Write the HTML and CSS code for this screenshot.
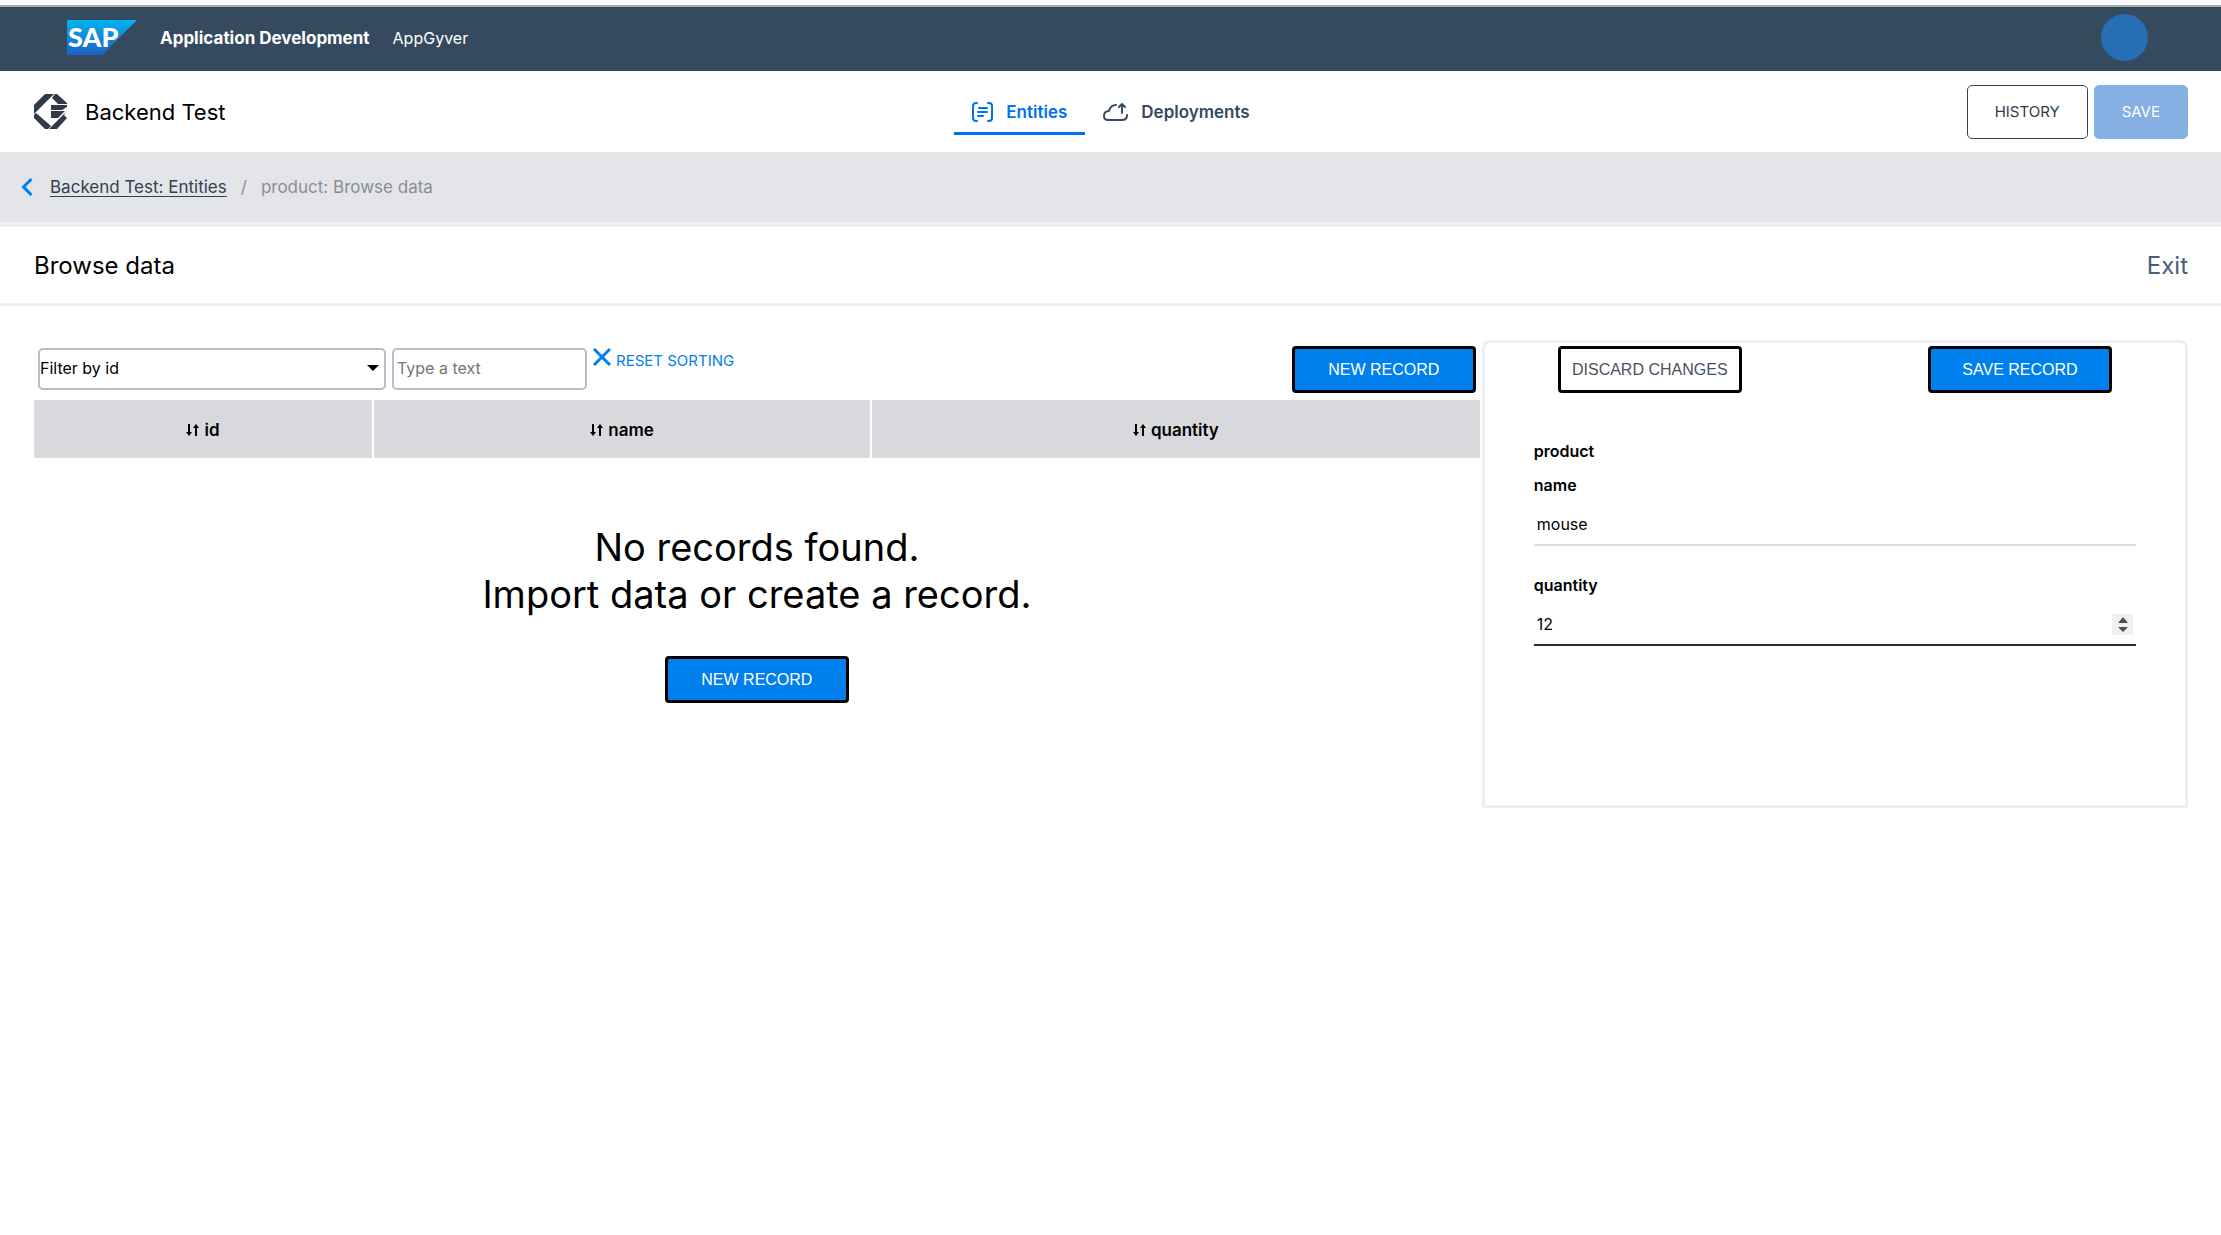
FILE: index.html
```html
<!DOCTYPE html>
<html lang="en">
<head>
<meta charset="utf-8">
<meta name="viewport" content="width=device-width, initial-scale=1">
<title>Backend Test – Browse data</title>
<link rel="stylesheet" href="styles.css">
</head>
<body>
<header class="shell">
  <svg class="sap-logo" viewBox="0 0 70 35" role="img" aria-label="SAP">
    <defs><linearGradient id="sap-blue" x1="0" y1="0" x2="0" y2="1"><stop offset="0" stop-color="#00b4f0"/><stop offset="1" stop-color="#1f60c2"/></linearGradient></defs>
    <path d="M0 0H70L35 35H0z" fill="url(#sap-blue)"/>
    <text class="sap-letters" x="1" y="27">SAP</text>
  </svg>
  <strong class="shell-title">Application Development</strong>
  <span class="shell-product">AppGyver</span>
  <button class="avatar" type="button" aria-label="Profile"></button>
</header>

<div class="project-bar">
  <div class="project">
    <svg class="project-icon" viewBox="0 0 33 35" aria-hidden="true">
      <g fill="#303a4b">
        <path d="M0 11 11 0H20L2 18 0 20z"/>
        <path d="M0 21 2 19 17 32 14 35H11L0 24z"/>
        <path d="M18 4 21 0H23L33 9V10H24z"/>
        <path d="M17 11H33V13L28 16H17z"/>
        <path d="M17 17H31L24 24H17z"/>
        <path d="M32 18 30 21 33 24 23 35H15z"/>
      </g>
    </svg>
    <span class="project-name">Backend Test</span>
  </div>
  <nav class="tabs">
    <a class="tab tab-active" href="#entities">
      <svg class="tab-icon" width="21" height="20" viewBox="0 0 21 20" fill="none" stroke="currentColor" stroke-width="2" stroke-linecap="round" aria-hidden="true"><path d="M5 1H4Q1 1 1 4V16Q1 19 4 19H5M16 1H17Q20 1 20 4V16Q20 19 17 19H16M7 6H15M6 10H15M6 14H11"/></svg>
      Entities
    </a>
    <a class="tab" href="#deployments">
      <svg class="tab-icon" width="25" height="20" viewBox="0 0 25 20" fill="none" stroke="currentColor" stroke-width="2" stroke-linecap="round" stroke-linejoin="round" aria-hidden="true"><path d="M13 3C9 3 7 5 6 9C2 9 1 12 1 14C1 17 3 18 5 18H19C22 18 24 16 24 13M19 11V2M16 5 19 2 22 5"/></svg>
      Deployments
    </a>
  </nav>
  <div class="project-actions">
    <button class="btn btn-history" type="button">HISTORY</button>
    <button class="btn btn-save" type="button">SAVE</button>
  </div>
</div>

<div class="crumb-bar">
  <a class="crumb-back" href="#back" aria-label="Back"><svg width="12" height="18" viewBox="0 0 12 18" fill="none" stroke="#0080ec" stroke-width="3" aria-hidden="true"><path d="M10.500 1 2.500 9 10.500 17"/></svg></a>
  <a class="crumb-link" href="#entities">Backend Test: Entities</a>
  <span>/</span>
  <span>product: Browse data</span>
</div>

<main class="sheet">
  <div class="sheet-head">
    <h1 class="sheet-title">Browse data</h1>
    <a class="exit" href="#exit">Exit</a>
  </div>
  <div class="workspace">
    <section class="records">
      <div class="toolbar">
        <div class="select-wrap">
          <select class="field-box filter" aria-label="Filter column">
            <option>Filter by id</option>
            <option>Filter by name</option>
            <option>Filter by quantity</option>
          </select>
          <svg class="select-arrow" width="12" height="6" viewBox="0 0 12 6" aria-hidden="true"><path d="M0 0H12L6 6z"/></svg>
        </div>
        <input class="field-box search" type="text" placeholder="Type a text" aria-label="Filter text">
        <button class="reset" type="button">
          <svg width="18" height="18" viewBox="0 0 18 18" fill="none" stroke="currentColor" stroke-width="3" aria-hidden="true"><path d="M1 1 17 17M17 1 1 17"/></svg>
          <span class="reset-text">RESET SORTING</span>
        </button>
        <button class="action action-primary toolbar-new" type="button">NEW RECORD</button>
      </div>
      <table class="grid">
        <colgroup><col class="col-id"><col class="col-name"><col></colgroup>
        <thead>
          <tr>
            <th scope="col"><svg class="sort" width="13" height="14" viewBox="0 0 13 14" aria-hidden="true"><use href="#sort-shape"/></svg>id</th>
            <th scope="col"><svg class="sort" width="13" height="14" viewBox="0 0 13 14" aria-hidden="true"><use href="#sort-shape"/></svg>name</th>
            <th scope="col"><svg class="sort" width="13" height="14" viewBox="0 0 13 14" aria-hidden="true"><defs><g id="sort-shape"><path d="M3 1V12M10 13V2" stroke="#000" stroke-width="2"/><path d="M0 9H6L3 13zM7 5H13L10 1z"/></g></defs><use href="#sort-shape"/></svg>quantity</th>
          </tr>
        </thead>
      </table>
      <div class="empty">
        <p class="empty-text">No records found.<br>Import data or create a record.</p>
        <button class="action action-primary" type="button">NEW RECORD</button>
      </div>
    </section>

    <form class="editor">
      <div class="editor-actions">
        <button class="action" type="button">DISCARD CHANGES</button>
        <button class="action action-primary" type="button">SAVE RECORD</button>
      </div>
      <div class="editor-body">
        <h2 class="editor-label">product</h2>
        <label class="editor-label" for="name">name</label>
        <input class="line-input" id="name" type="text" value="mouse">
        <label class="editor-label" for="quantity">quantity</label>
        <input class="line-input line-active" id="quantity" type="number" value="12">
      </div>
    </form>
  </div>
</main>
</body>
</html>
```
FILE: styles.css
```css
* { box-sizing: border-box; }

body {
  margin: 0;
  background: #fff;
  color: #000;
  font: 400 16px/24px Inter, "Liberation Sans", sans-serif;
}

button, input, select { margin: 0; font: inherit; color: inherit; }
a { color: inherit; text-decoration: none; }
svg { display: block; flex: none; }

/* Top shell bar */
.shell {
  display: flex;
  align-items: center;
  height: 71px;
  padding: 0 73px 2px 67px;
  border-top: 5px solid #f7f7f7;
  background: #354a5f;
  box-shadow: inset 0 2px #a5aaab;
  color: #fff;
}
.sap-logo { width: 70px; height: 35px; }
.sap-letters { fill: #fff; font: 900 27px Lato, sans-serif; }
.shell-title { margin: 0 23px; padding-top: 2px; font-size: 17px; font-weight: 700; }
.shell-product { padding-top: 2px; }
.avatar {
  width: 47px;
  height: 47px;
  margin-left: auto;
  border: 0;
  border-radius: 50%;
  background: #276eb4;
}

/* Project bar */
.project-bar {
  display: grid;
  grid-template-columns: 1fr auto 1fr;
  align-items: center;
  height: 81px;
  padding: 0 33px 0 34px;
}
.project { display: flex; align-items: center; gap: 18px; }
.project-icon { width: 33px; height: 35px; }
.project-name { font-size: 22px; }
.tabs { display: flex; }
.tab {
  display: flex;
  align-items: center;
  gap: 13px;
  height: 47px;
  padding: 3px 18px 0;
  border-bottom: 3px solid transparent;
  color: #354a5f;
  font-size: 17px;
  font-weight: 600;
}
.tab-active { border-color: #0070f2; color: #0070f2; }
.project-actions { display: flex; justify-content: flex-end; gap: 6px; }
.btn {
  height: 54px;
  padding: 0 27px;
  border: 1px solid #354052;
  border-radius: 5px;
  background: #fff;
  color: #303a4b;
  font-size: 15px;
}
.btn-save { border-color: #86afe3; background: #86afe3; color: #fff; }

/* Breadcrumb */
.crumb-bar {
  display: flex;
  align-items: center;
  gap: 14px;
  height: 70px;
  padding: 0 21px;
  background: #e4e5e9;
  color: #8a8d94;
  font-size: 17px;
}
.crumb-back { margin-right: 3px; }
.crumb-link {
  color: #354052;
  text-decoration: underline;
  text-underline-offset: 3px;
}

/* Sheet */
.sheet { border-top: 5px solid #eeeff1; }
.sheet-head {
  display: flex;
  align-items: center;
  justify-content: space-between;
  height: 79px;
  padding: 2px 33px 0 34px;
  border-bottom: 3px solid #eeeff1;
}
.sheet-title { margin: 0; font-size: 24px; font-weight: 400; }
.exit { color: #475e75; font-size: 24px; }

.workspace {
  display: grid;
  grid-template-columns: 41fr 20fr;
  align-items: start;
  padding: 34px 33px 34px 34px;
}

/* Records list */
.records { padding: 6px 2px 0 0; }
.toolbar {
  display: flex;
  align-items: flex-start;
  gap: 6px;
  height: 54px;
  padding: 0 4px;
}
.field-box {
  height: 42px;
  margin-top: 2px;
  border: 2px solid #b9bdc8;
  border-radius: 5px;
  background: #fff;
}
.select-wrap { display: grid; align-items: center; width: 348px; }
.select-wrap > * { grid-area: 1 / 1; }
.filter { width: 100%; padding: 0 0 2px; appearance: none; }
.select-arrow { justify-self: end; margin-right: 7px; pointer-events: none; }
.search { width: 195px; padding: 0 3px 2px; }
.search::placeholder { color: #757575; }
.reset {
  display: flex;
  align-items: flex-start;
  gap: 5px;
  padding: 2px 0;
  border: 0;
  background: none;
  color: #0080ec;
  font-size: 15px;
}
.reset-text { line-height: 26px; }
.toolbar-new { margin-left: auto; }

.action {
  width: 184px;
  height: 47px;
  padding: 0;
  border: 3px solid #000;
  border-radius: 4px;
  background: #fff;
  color: #475266;
  font: 400 16px/24px "Liberation Sans", Arial, sans-serif;
}
.action-primary { background: #0080ec; color: #fff; }

.grid { width: 100%; border-collapse: collapse; table-layout: fixed; }
.grid th {
  height: 58px;
  padding: 2px 0 0;
  border-right: 2px solid #fff;
  background: #d8d9dd;
  font-size: 17px;
  font-weight: 600;
}
.grid th:last-child { border-right: 0; }
.col-id { width: 339px; }
.col-name { width: 498px; }
.sort { display: inline-block; margin-right: 5px; vertical-align: -1px; }

.empty {
  display: flex;
  flex-direction: column;
  align-items: center;
  gap: 38px;
  padding-top: 66px;
}
.empty-text { margin: 0; font-size: 38px; line-height: 47px; text-align: center; }

/* Record editor */
.editor {
  min-height: 468px;
  padding: 3px 49px;
  border: 3px solid #eeeff1;
  border-radius: 8px 8px 0 0;
}
.editor-actions { display: flex; justify-content: space-between; padding: 0 24px; }
.editor-body { display: flex; flex-direction: column; padding-top: 41px; }
.editor-label { margin: 0; font-size: 16px; font-weight: 600; line-height: 34px; }
.line-input {
  width: 100%;
  height: 44px;
  margin-bottom: 22px;
  padding: 2px 3px 0;
  border: 0;
  border-bottom: 2px solid #dcdde1;
  background: none;
}
.line-active { border-color: #2a2d33; }
.line-active::-webkit-inner-spin-button {
  width: 21px;
  height: 21px;
  appearance: none;
  background: #f0f0f0 url("data:image/svg+xml,%3Csvg xmlns='http://www.w3.org/2000/svg' viewBox='0 0 21 21'%3E%3Cpath fill='%23505050' d='M6 9 11 3 16 9zM6 13H16L11 18z'/%3E%3C/svg%3E") center / 21px 21px no-repeat;
  opacity: 1;
}
```
